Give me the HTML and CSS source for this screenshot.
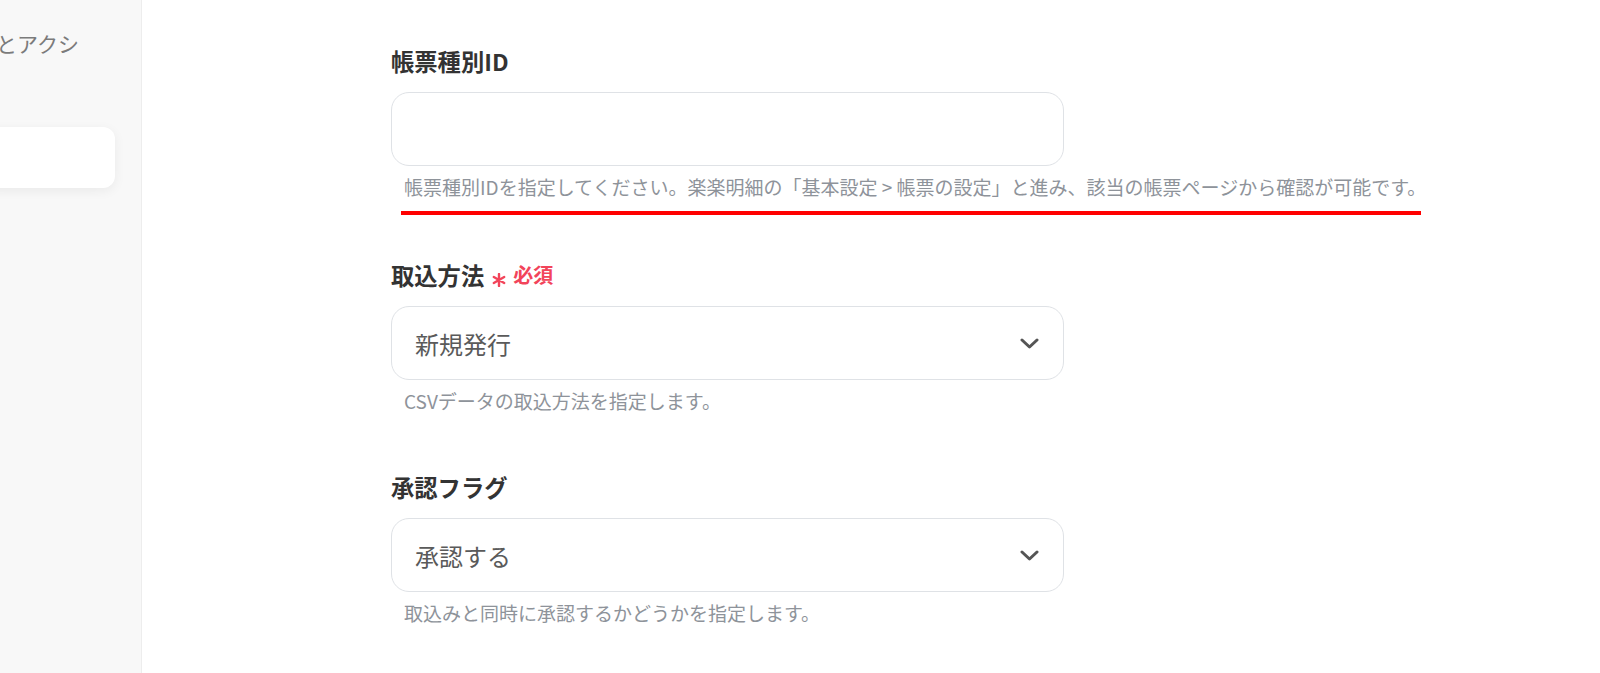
FILE: index.html
```html
<!DOCTYPE html>
<html lang="ja">
<head>
<meta charset="utf-8">
<title>帳票設定</title>
<link rel="stylesheet" href="styles.css">
</head>
<body>
<div class="app">
  <aside class="sidebar">
    <div class="side-title">とアクシ</div>
    <div class="side-card"></div>
  </aside>
  <main class="content">
    <div class="field">
      <div class="label">帳票種別ID</div>
      <div class="box"></div>
      <div class="help">帳票種別IDを指定してください。楽楽明細の「基本設定 &gt; 帳票の設定」と進み、該当の帳票ページから確認が可能です。<span class="annot"></span></div>
    </div>
    <div class="field">
      <div class="label">取込方法<span class="req"><svg class="ast" width="14" height="14" viewBox="0 0 14 14"><path d="M7 1v12M1.8 4l10.4 6M1.8 10l10.4-6" stroke="#f2445a" stroke-width="2.4" stroke-linecap="round"/></svg><span class="req-text">必須</span></span></div>
      <div class="box"><span class="value">新規発行</span><svg class="chev" width="19" height="11" viewBox="0 0 19 11"><polyline points="2,2 9.5,9 17,2" fill="none" stroke="#555" stroke-width="3" stroke-linecap="round" stroke-linejoin="round"/></svg></div>
      <div class="help">CSVデータの取込方法を指定します。</div>
    </div>
    <div class="field">
      <div class="label">承認フラグ</div>
      <div class="box"><span class="value">承認する</span><svg class="chev" width="19" height="11" viewBox="0 0 19 11"><polyline points="2,2 9.5,9 17,2" fill="none" stroke="#555" stroke-width="3" stroke-linecap="round" stroke-linejoin="round"/></svg></div>
      <div class="help">取込みと同時に承認するかどうかを指定します。</div>
    </div>
  </main>
</div>
</body>
</html>
```

FILE: styles.css
```css
html, body {
  margin: 0;
  height: 100%;
  overflow: hidden;
  background: #fff;
}
body {
  font-family: "Noto Sans CJK JP", "Noto Sans", sans-serif;
}
.app {
  display: flex;
  height: 673px;
}
.sidebar {
  width: 141px;
  flex: none;
  background: #f8f8f8;
  border-right: 1px solid #ededed;
  overflow: hidden;
  padding-top: 28px;
}
.side-title {
  font-size: 21px;
  line-height: 30px;
  color: #7b7b7b;
  margin-left: -4px;
  white-space: nowrap;
}
.side-card {
  margin-top: 69px;
  margin-left: -20px;
  width: 135px;
  height: 61px;
  background: #fff;
  border-radius: 12px;
  box-shadow: 0 3px 12px rgba(0, 0, 0, 0.06);
}
.content {
  flex: 1;
  padding: 44px 0 0 249px;
}
.field {
  width: 673px;
  margin-bottom: 55px;
}
.field:first-child {
  margin-bottom: 57px;
}
.label {
  font-size: 23.3px;
  font-weight: 700;
  line-height: 34px;
  color: #333;
  margin-bottom: 14px;
  display: flex;
  align-items: center;
}
.req {
  display: flex;
  align-items: center;
  margin-left: 8px;
}
.ast {
  margin-top: 10px;
}
.req-text {
  font-size: 20px;
  color: #f2445a;
  margin-left: 7px;
}
.box {
  height: 74px;
  box-sizing: border-box;
  border: 1px solid #dfe2e6;
  border-radius: 18px;
  display: flex;
  align-items: center;
  justify-content: space-between;
  padding: 0 24px 0 23px;
}
.value {
  font-size: 24px;
  color: #5a5a5a;
}
.help {
  font-size: 19px;
  line-height: 28px;
  color: #8e939a;
  margin-top: 7px;
  padding-left: 13px;
  position: relative;
  white-space: nowrap;
}
.annot {
  position: absolute;
  left: 10px;
  top: 38px;
  width: 1020px;
  height: 4px;
  background: #ff0000;
}
```
